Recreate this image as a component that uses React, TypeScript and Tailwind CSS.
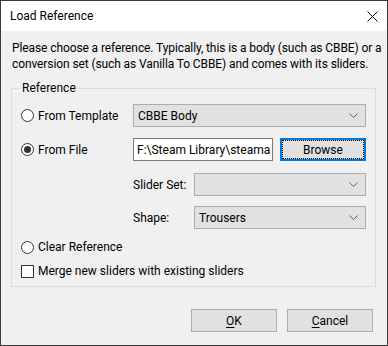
import React from "react";

const font = { fontFamily: 'Roboto, "Liberation Sans", sans-serif' };

const Chevron = () => (
  <svg width="9" height="5" viewBox="0 0 9 5" className="shrink-0">
    <path d="M0.5 0.5 L4.5 4.5 L8.5 0.5" fill="none" stroke="#606060" strokeWidth="1" />
  </svg>
);

const Combo = ({ value, width }: { value: string; width: string }) => (
  <div className={`${width} h-[23px] flex items-center justify-between border border-[#adadad] bg-[#e1e1e1] pl-[4px] pr-[7px]`}>
    <span className="text-black">{value}</span>
    <Chevron />
  </div>
);

const Radio = ({ checked, label }: { checked?: boolean; label: string }) => (
  <div className="flex items-center gap-[4px] h-[16px]">
    <span className="w-[13px] h-[13px] rounded-full border border-[#333333] bg-white flex items-center justify-center">
      {checked && <span className="w-[7px] h-[7px] rounded-full bg-[#333333]" />}
    </span>
    <span>{label}</span>
  </div>
);

const Button = ({ children, focused }: { children: React.ReactNode; focused?: boolean }) => (
  <div
    className={`w-[86px] h-[23px] bg-[#e1e1e1] flex items-center justify-center ${
      focused ? "border-2 border-[#0078d7]" : "border border-[#adadad]"
    }`}
  >
    {focused ? (
      <div className="w-full h-full border border-dotted border-black flex items-center justify-center">{children}</div>
    ) : (
      children
    )}
  </div>
);

export default function App() {
  return (
    <div
      className="w-[388px] h-[346px] border border-[#3a3a3a] bg-[#f0f0f0] flex flex-col text-[12px] leading-[16px] text-black"
      style={font}
    >
      {/* title bar */}
      <div className="h-[30px] bg-white flex items-center justify-between pl-[9px] pr-[9px]">
        <span>Load Reference</span>
        <svg width="11" height="11" viewBox="0 0 11 11">
          <path d="M0.5 0.5 L10.5 10.5 M10.5 0.5 L0.5 10.5" stroke="#000" strokeWidth="1" />
        </svg>
      </div>

      <div className="flex flex-col px-[10px] pt-[9px]">
        <p className="pl-[1px] whitespace-nowrap tracking-[-0.1px]">
          Please choose a reference. Typically, this is a body (such as CBBE) or a
          <br />
          conversion set (such as Vanilla To CBBE) and comes with its sliders.
        </p>

        <fieldset className="mt-[8px] border border-[#dcdcdc] w-[365px] h-[207px] px-[9px]">
          <legend className="ml-[-1px] px-[2px]">Reference</legend>

          <div className="flex flex-col pt-[8px]">
            <div className="flex items-center justify-between">
              <Radio label="From Template" />
              <Combo value="CBBE Body" width="w-[233px]" />
            </div>

            <div className="flex items-center justify-between mt-[11px]">
              <Radio checked label="From File" />
              <div className="flex gap-[7px]">
                <div className="w-[140px] h-[23px] border border-[#7a7a7a] bg-white pl-[3px] flex items-center overflow-hidden whitespace-nowrap">
                  <span className="w-[134px] overflow-hidden">F:\Steam Library\steamap</span>
                </div>
                <Button focused>Browse</Button>
              </div>
            </div>

            <div className="flex items-center justify-end mt-[12px]">
              <span className="w-[61px]">Slider Set:</span>
              <Combo value="" width="w-[172px]" />
            </div>

            <div className="flex items-center justify-end mt-[10px]">
              <span className="w-[61px]">Shape:</span>
              <Combo value="Trousers" width="w-[172px]" />
            </div>

            <div className="mt-[10px]">
              <Radio label="Clear Reference" />
            </div>

            <div className="flex items-center gap-[4px] mt-[8px]">
              <span className="w-[13px] h-[13px] border border-[#333333] bg-white" />
              <span>Merge new sliders with existing sliders</span>
            </div>
          </div>
        </fieldset>

        <div className="flex justify-end gap-[10px] mt-[22px] pr-[4px]">
          <Button>
            <span>
              <span className="underline underline-offset-2">O</span>K
            </span>
          </Button>
          <Button>
            <span>
              <span className="underline underline-offset-2">C</span>ancel
            </span>
          </Button>
        </div>
      </div>
    </div>
  );
}
